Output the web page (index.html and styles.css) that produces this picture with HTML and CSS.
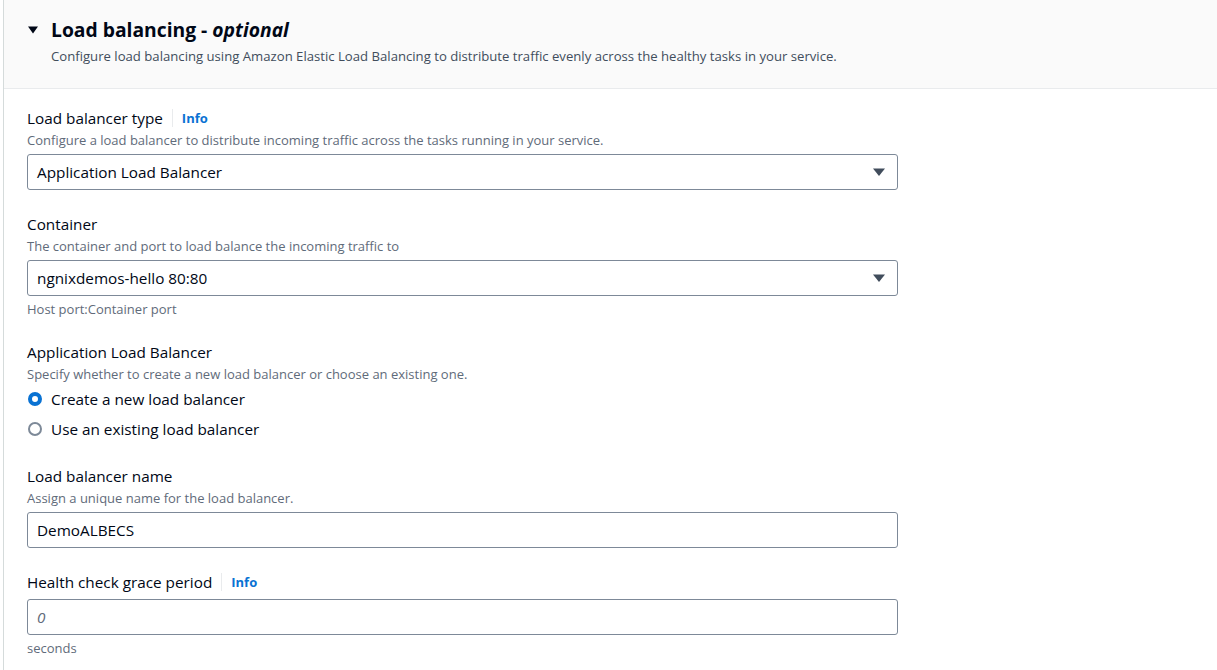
FILE: index.html
```html
<!DOCTYPE html>
<html lang="en">
<head>
<meta charset="utf-8">
<title>Load balancing</title>
<link rel="stylesheet" href="styles.css">
</head>
<body>
<section class="panel">
  <header class="panel-header">
    <div class="title-row">
      <svg class="expand-caret" width="12" height="10" viewBox="0 0 12 10" aria-hidden="true"><path d="M1 1.5h10L6 8.5z" fill="#000716"/></svg>
      <h2 class="title">Load balancing - <em>optional</em></h2>
    </div>
    <p class="header-desc">Configure load balancing using Amazon Elastic Load Balancing to distribute traffic evenly across the healthy tasks in your service.</p>
  </header>

  <div class="panel-body">
    <div class="field">
      <div class="label-row"><span class="label">Load balancer type</span><a class="info">Info</a></div>
      <p class="desc">Configure a load balancer to distribute incoming traffic across the tasks running in your service.</p>
      <div class="control select">
        <span class="value">Application Load Balancer</span>
        <svg class="caret" width="14" height="10" viewBox="0 0 14 10" aria-hidden="true"><path d="M1 1.5h12L7 9z" fill="#414d5c"/></svg>
      </div>
    </div>

    <div class="field">
      <div class="label-row"><span class="label">Container</span></div>
      <p class="desc">The container and port to load balance the incoming traffic to</p>
      <div class="control select">
        <span class="value">ngnixdemos-hello 80:80</span>
        <svg class="caret" width="14" height="10" viewBox="0 0 14 10" aria-hidden="true"><path d="M1 1.5h12L7 9z" fill="#414d5c"/></svg>
      </div>
      <p class="hint">Host port:Container port</p>
    </div>

    <div class="field">
      <div class="label-row"><span class="label">Application Load Balancer</span></div>
      <p class="desc">Specify whether to create a new load balancer or choose an existing one.</p>
      <div class="radios">
        <div class="radio-row"><span class="radio checked"></span><span class="radio-label">Create a new load balancer</span></div>
        <div class="radio-row"><span class="radio"></span><span class="radio-label">Use an existing load balancer</span></div>
      </div>
    </div>

    <div class="field">
      <div class="label-row"><span class="label">Load balancer name</span></div>
      <p class="desc">Assign a unique name for the load balancer.</p>
      <div class="control input"><span class="value">DemoALBECS</span></div>
    </div>

    <div class="field">
      <div class="label-row"><span class="label">Health check grace period</span><a class="info">Info</a></div>
      <div class="control input no-desc"><span class="placeholder">0</span></div>
      <p class="hint">seconds</p>
    </div>
  </div>
</section>
</body>
</html>
```

FILE: styles.css
```css
* { box-sizing: border-box; }

html, body {
  margin: 0;
  padding: 0;
  background: #ffffff;
}

body {
  font-family: "Open Sans", "Noto Sans", sans-serif;
  color: #000716;
}

.panel {
  margin-left: 3px;
  border-left: 1px solid #d5dbdb;
  min-height: 670px;
}

.panel-header {
  background: #fafafa;
  border-bottom: 1px solid #e9ebed;
  padding: 18px 20px 22px 23px;
}

.title-row {
  display: flex;
  align-items: center;
  gap: 12px;
}

.expand-caret {
  flex: none;
}

.title {
  margin: 0;
  font-size: 19.3px;
  line-height: 24px;
  font-weight: 700;
}

.title em {
  font-style: italic;
}

.header-desc {
  margin: 4px 0 0 24px;
  font-size: 13.15px;
  line-height: 20px;
  color: #414d5c;
}

.panel-body {
  padding: 18px 0 20px 23px;
  display: flex;
  flex-direction: column;
  gap: 23px;
}

.field {
  width: 871px;
  display: flex;
  flex-direction: column;
}

.label-row {
  display: flex;
  align-items: center;
  height: 22px;
}

.label {
  font-size: 15.3px;
  line-height: 22px;
}

.info {
  margin-left: 9px;
  padding-left: 9px;
  border-left: 1px solid #e9ebed;
  font-size: 13px;
  line-height: 18px;
  font-weight: 700;
  color: #0972d3;
}

.desc {
  margin: 2px 0 0;
  font-size: 13px;
  line-height: 18px;
  color: #5f6b7a;
}

.hint {
  margin: 4px 0 0;
  font-size: 13px;
  line-height: 18px;
  color: #5f6b7a;
}

.control {
  margin-top: 5px;
  height: 36px;
  border: 1px solid #7d8998;
  border-radius: 3px;
  display: flex;
  align-items: center;
  justify-content: space-between;
  padding: 0 11px 0 9px;
  background: #ffffff;
}

.control.no-desc {
  margin-top: 6px;
}

.value {
  font-size: 15.3px;
  color: #000716;
}

.placeholder {
  font-size: 15.3px;
  font-style: italic;
  color: #5f6b7a;
}

.radios {
  margin-top: 5px;
  margin-bottom: 2px;
  display: flex;
  flex-direction: column;
  gap: 8px;
}

.radio-row {
  display: flex;
  align-items: center;
  gap: 9px;
  height: 22px;
}

.radio {
  width: 14px;
  height: 14px;
  border-radius: 50%;
  border: 2px solid #7d8998;
  margin-left: 1px;
  flex: none;
}

.radio.checked {
  border: 4px solid #0972d3;
}

.radio-label {
  font-size: 15.3px;
  line-height: 22px;
}
```
